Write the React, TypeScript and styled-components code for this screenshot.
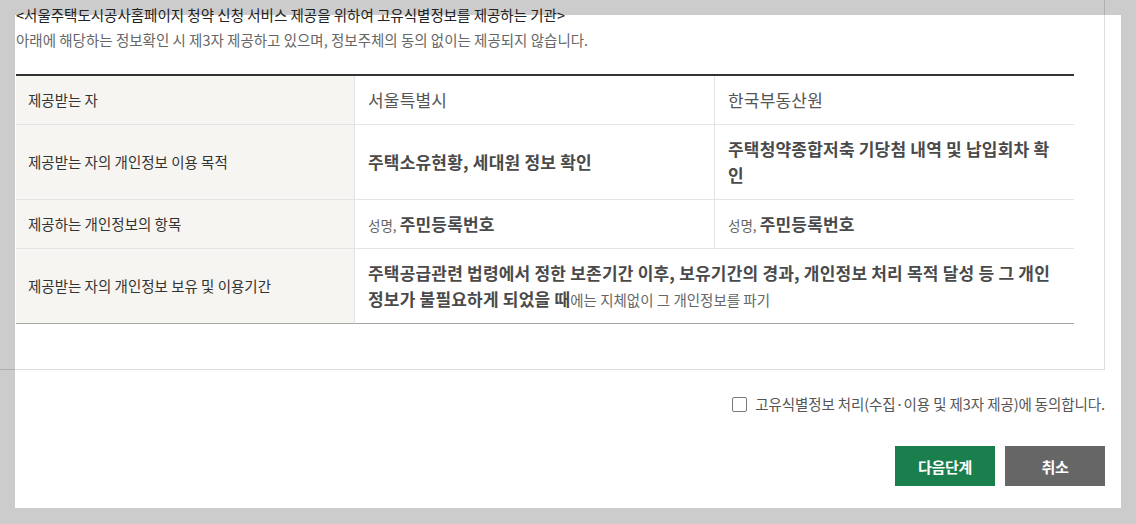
import styled, { createGlobalStyle } from 'styled-components'

// Consent step: institutions receiving unique identification data

const GlobalStyle = createGlobalStyle`
  html, body {
    margin: 0;
    padding: 0;
    background: #cccccc;
  }

  body {
    font-family: 'Noto Sans CJK KR', 'Noto Sans', sans-serif;
    color: #333;
  }
`

type Row = {
  label: string
  first: React.ReactNode
  second?: React.ReactNode
}

const buildRows = (): Row[] => {
  const idItems = (
    <>
      <SmallText>성명, </SmallText>
      <StrongText>주민등록번호</StrongText>
    </>
  )

  return [
    { label: '제공받는 자', first: <PlainText>서울특별시</PlainText>, second: <PlainText>한국부동산원</PlainText> },
    {
      label: '제공받는 자의 개인정보 이용 목적',
      first: <StrongText>주택소유현황, 세대원 정보 확인</StrongText>,
      second: <StrongText>주택청약종합저축 기당첨 내역 및 납입회차 확인</StrongText>
    },
    { label: '제공하는 개인정보의 항목', first: idItems, second: idItems },
    {
      label: '제공받는 자의 개인정보 보유 및 이용기간',
      first: (
        <>
          <StrongText>
            주택공급관련 법령에서 정한 보존기간 이후, 보유기간의 경과, 개인정보 처리 목적 달성 등 그 개인정보가
            불필요하게 되었을 때
          </StrongText>
          <NoteText>에는 지체없이 그 개인정보를 파기</NoteText>
        </>
      )
    }
  ]
}

const App = () => {
  const rows = buildRows()

  return (
    <Page>
      <GlobalStyle />
      <Panel>
        <ScrollArea>
          <Title>&lt;서울주택도시공사홈페이지 청약 신청 서비스 제공을 위하여 고유식별정보를 제공하는 기관&gt;</Title>
          <Description>
            아래에 해당하는 정보확인 시 제3자 제공하고 있으며, 정보주체의 동의 없이는 제공되지 않습니다.
          </Description>
          <InfoTable>
            <colgroup>
              <col style={{ width: 339 }} />
              <col style={{ width: 360 }} />
              <col style={{ width: 359 }} />
            </colgroup>
            <tbody>
              {rows.map((row, i) => {
                const last = i === rows.length - 1
                return (
                  <tr key={row.label}>
                    <HeadCell $last={last}>{row.label}</HeadCell>
                    {row.second ? (
                      <>
                        <ValueCell $last={last} $divider>
                          {row.first}
                        </ValueCell>
                        <ValueCell $last={last}>{row.second}</ValueCell>
                      </>
                    ) : (
                      <ValueCell colSpan={2} $last={last}>
                        {row.first}
                      </ValueCell>
                    )}
                  </tr>
                )
              })}
            </tbody>
          </InfoTable>
        </ScrollArea>

        <AgreeRow>
          <Checkbox type="checkbox" id="agree" />
          <AgreeLabel htmlFor="agree">고유식별정보 처리(수집·이용 및 제3자 제공)에 동의합니다.</AgreeLabel>
        </AgreeRow>

        <ButtonRow>
          <ActionButton $variant="primary">다음단계</ActionButton>
          <ActionButton $variant="secondary">취소</ActionButton>
        </ButtonRow>
      </Panel>
    </Page>
  )
}

export default App

const Page = styled.div`
  padding: 15px;
  height: 524px;
  box-sizing: border-box;
`

const Panel = styled.section`
  display: flex;
  flex-direction: column;
  height: 493px;
  box-sizing: border-box;
  padding: 0 16px 0 0;
  background: #fff;
`

const ScrollArea = styled.div`
  width: calc(100% + 15px);
  margin: -15px 0 0 -15px;
  padding: 4px 30px 45px 16px;
  box-sizing: border-box;
  border-right: 1px solid rgba(0, 0, 0, 0.135);
  border-bottom: 1px solid rgba(0, 0, 0, 0.135);
`

const Title = styled.p`
  margin: 0;
  font-size: 14.5px;
  line-height: 22px;
  color: #222;
`

const Description = styled.p`
  margin: 3px 0 0;
  font-size: 14.5px;
  line-height: 22px;
  color: #666;
`

const InfoTable = styled.table`
  width: 1058px;
  margin-top: 23px;
  table-layout: fixed;
  border-collapse: separate;
  border-spacing: 0;
  border-top: 2px solid #333;
`

const HeadCell = styled.th<{ $last?: boolean }>`
  padding: 11px 12px;
  background: #f6f5f1;
  border-right: 1px solid #e4e4e4;
  border-bottom: 1px solid ${({ $last }) => ($last ? '#a5a5a5' : '#e4e4e4')};
  text-align: left;
  font-size: 14.5px;
  font-weight: 400;
  line-height: 26px;
  color: #333;
`

const ValueCell = styled.td<{ $last?: boolean; $divider?: boolean }>`
  padding: 11px 16px 11px 13px;
  border-right: ${({ $divider }) => ($divider ? '1px solid #e4e4e4' : 'none')};
  border-bottom: 1px solid ${({ $last }) => ($last ? '#a5a5a5' : '#e4e4e4')};
  vertical-align: middle;
  font-size: 17px;
  line-height: 26px;
  color: #555;
`

const PlainText = styled.span`
  font-size: 17px;
  letter-spacing: 0.2px;
  color: #555;
`

const StrongText = styled.strong`
  font-size: 17px;
  font-weight: 700;
  letter-spacing: 0.2px;
  color: #4a4a4a;
`

const SmallText = styled.span`
  font-size: 13.5px;
  line-height: 1;
  color: #666;
`

const NoteText = styled.span`
  font-size: 14.5px;
  line-height: 1;
  color: #666;
`

const AgreeRow = styled.div`
  display: flex;
  justify-content: flex-end;
  align-items: center;
  gap: 8px;
  margin-top: 24px;
  height: 20px;
`

const Checkbox = styled.input`
  appearance: none;
  margin: 0;
  width: 15px;
  height: 15px;
  border: 1px solid #7a7a7a;
  border-radius: 2px;
  background: #fff;
  box-sizing: border-box;
`

const AgreeLabel = styled.label`
  font-size: 14.5px;
  line-height: 20px;
  letter-spacing: -0.1px;
  color: #555;
`

const ButtonRow = styled.div`
  display: flex;
  justify-content: flex-end;
  gap: 10px;
  margin-top: 32px;
`

const ActionButton = styled.button<{ $variant: 'primary' | 'secondary' }>`
  width: 100px;
  height: 40px;
  border: none;
  padding: 0;
  background: ${({ $variant }) => ($variant === 'primary' ? '#1a7e4d' : '#666666')};
  color: #fff;
  font-family: 'Noto Sans CJK KR', sans-serif;
  font-size: 15px;
  font-weight: 700;
  letter-spacing: -0.3px;
  cursor: pointer;
`
